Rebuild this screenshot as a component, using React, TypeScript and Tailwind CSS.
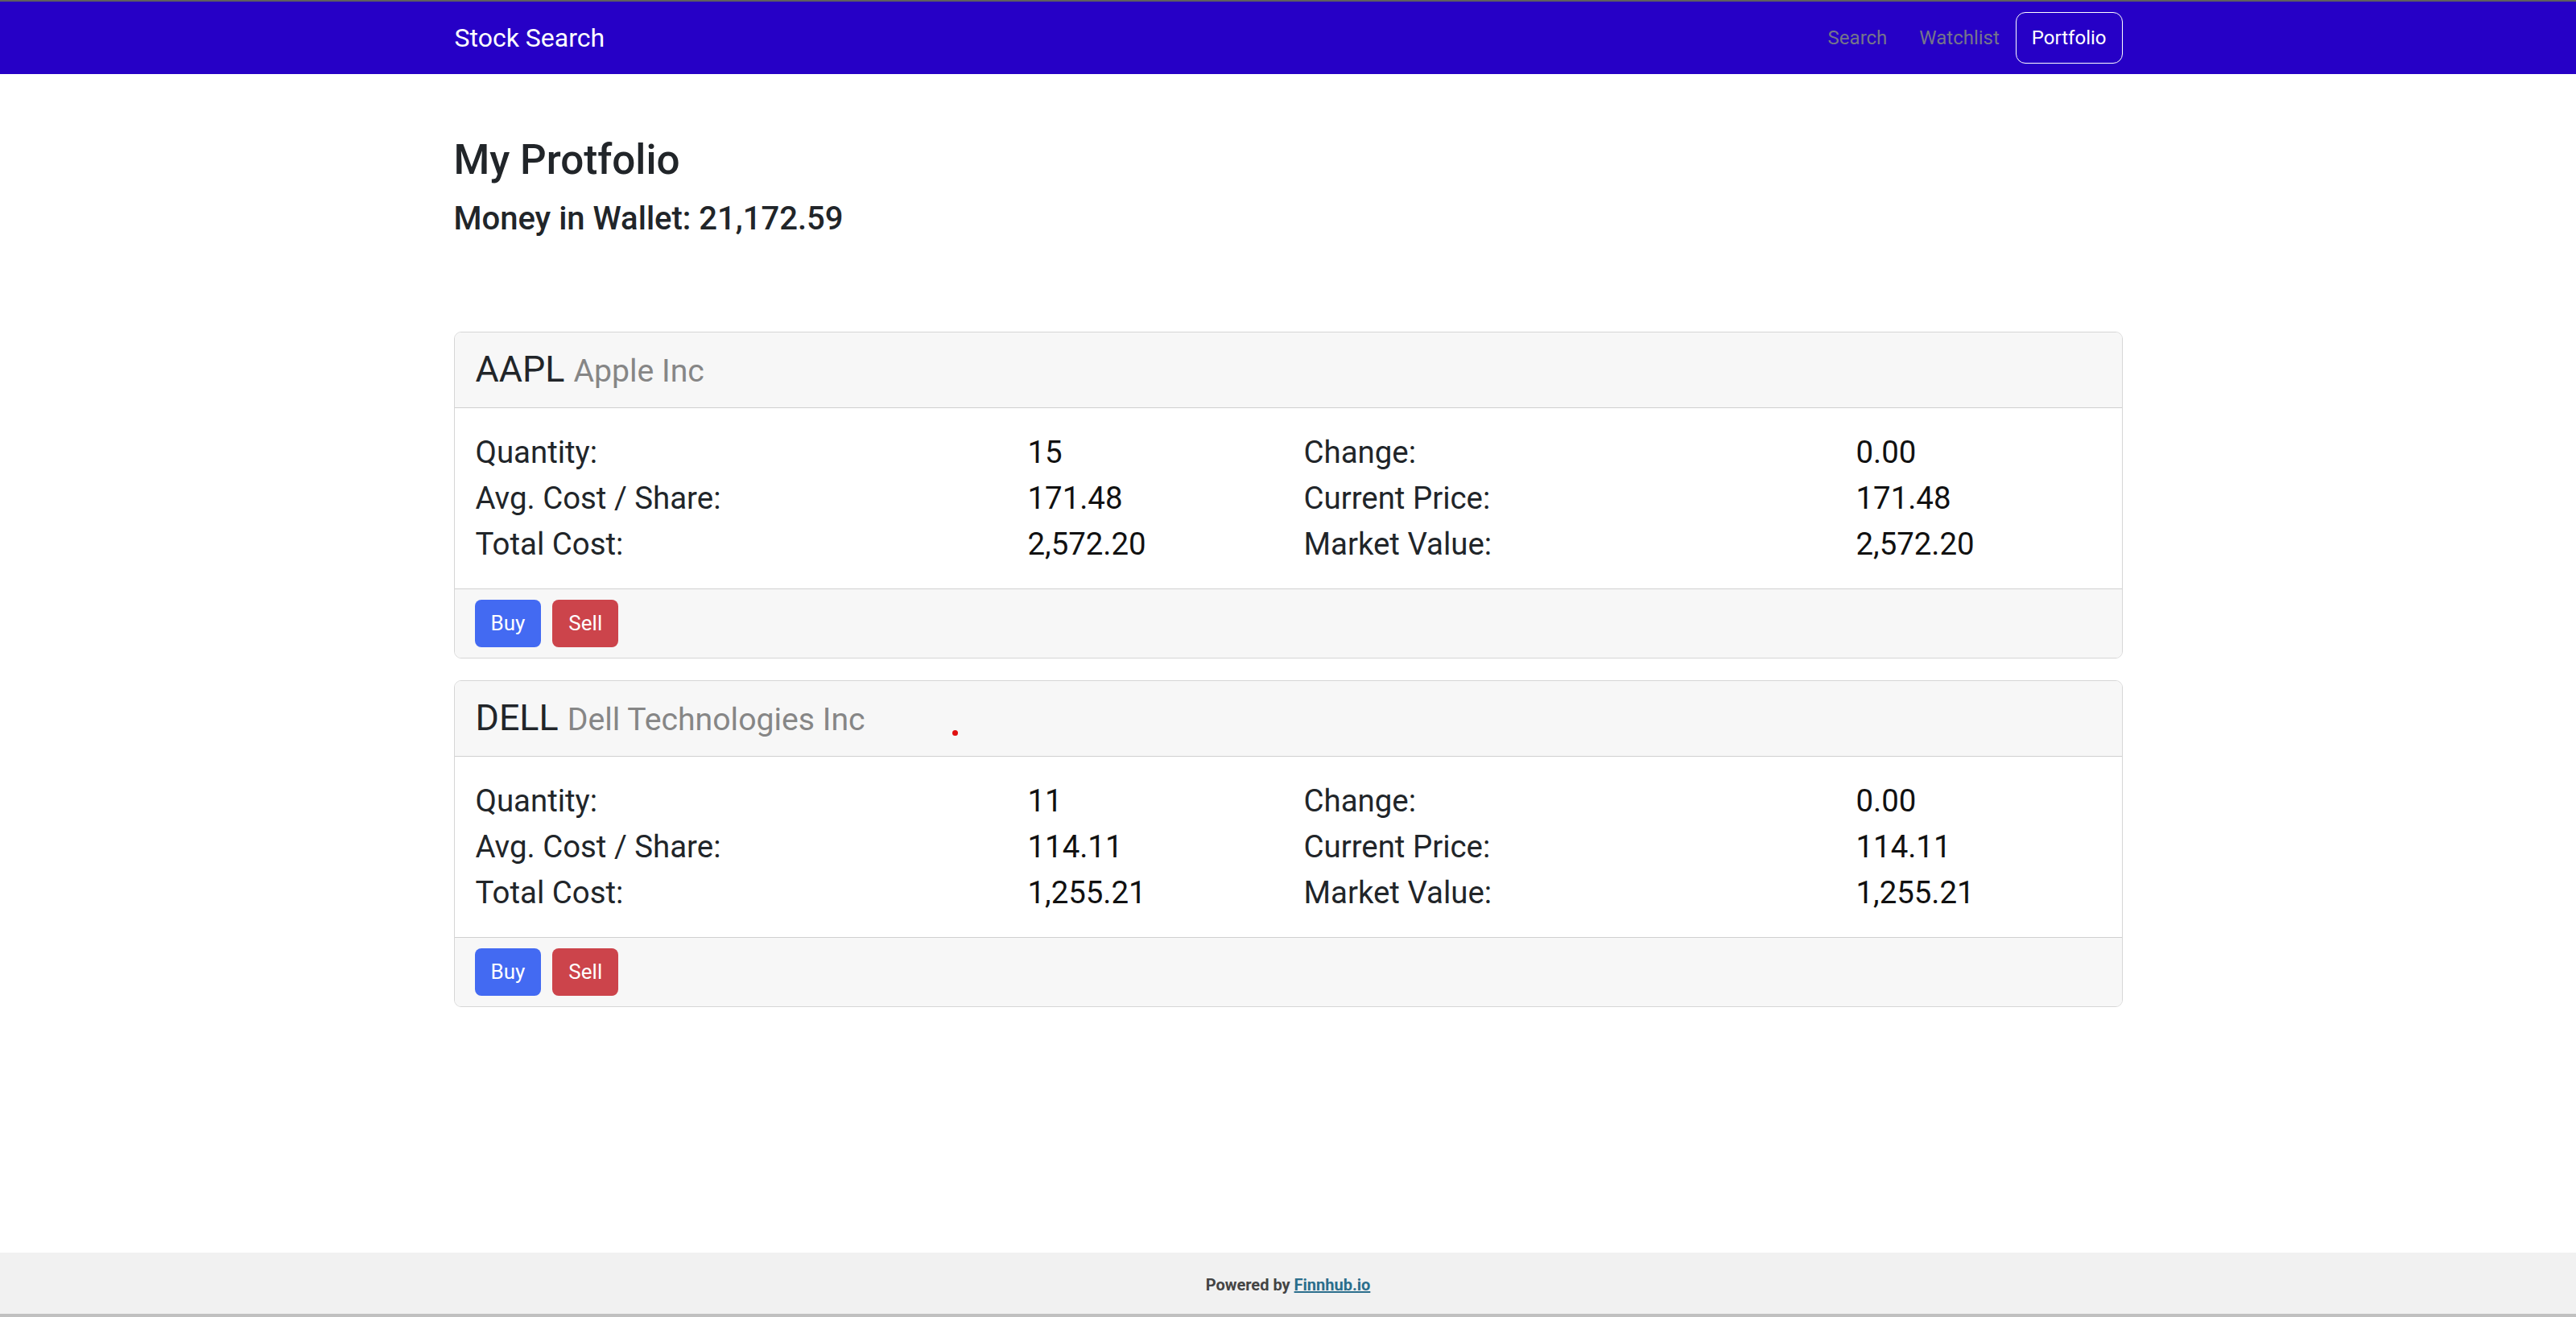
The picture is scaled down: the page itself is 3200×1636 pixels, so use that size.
type Holding = {
  symbol: string;
  name: string;
  quantity: string;
  avgCost: string;
  totalCost: string;
  change: string;
  price: string;
  marketValue: string;
};

const holdings: Holding[] = [
  {
    symbol: 'AAPL',
    name: 'Apple Inc',
    quantity: '15',
    avgCost: '171.48',
    totalCost: '2,572.20',
    change: '0.00',
    price: '171.48',
    marketValue: '2,572.20',
  },
  {
    symbol: 'DELL',
    name: 'Dell Technologies Inc',
    quantity: '11',
    avgCost: '114.11',
    totalCost: '1,255.21',
    change: '0.00',
    price: '114.11',
    marketValue: '1,255.21',
  },
];

function Navbar() {
  return (
    <nav className="border-t-2 border-[#5f5f5f] bg-[#2600c6] h-[92px]">
      <div className="w-[2073px] mx-auto h-full flex items-center justify-between">
        <a className="text-[32px] text-white leading-none pl-px">Stock Search</a>
        <div className="flex items-center text-[24px] leading-none">
          <a className="px-[20px] text-[#75758a]">Search</a>
          <a className="px-[20px] text-[#75758a]">Watchlist</a>
          <a className="h-[64px] px-[19px] flex items-center border-[1.5px] border-white rounded-[12px] text-white">
            Portfolio
          </a>
        </div>
      </div>
    </nav>
  );
}

function HoldingCard({ h }: { h: Holding }) {
  const rows: [string, string, string, string][] = [
    ['Quantity:', h.quantity, 'Change:', h.change],
    ['Avg. Cost / Share:', h.avgCost, 'Current Price:', h.price],
    ['Total Cost:', h.totalCost, 'Market Value:', h.marketValue],
  ];
  return (
    <div className="border border-[#d6d6d6] rounded-[9px] overflow-hidden">
      <div className="bg-[#f7f7f7] border-b border-[#d0d0d0] pl-[26px] pt-[19px] pb-[18px]">
        <h3 className="text-[44.8px] leading-[54px] text-[#212529]">
          {h.symbol} <small className="text-[39.2px] text-[#868686]">{h.name}</small>
        </h3>
      </div>
      <div className="pt-[26px] pb-[27px] pl-[26px] grid grid-cols-[686px_343px_686px_1fr] text-[38.4px] leading-[57px] text-[#212529]">
        {rows.map((r) => (
          <div key={r[0]} className="contents">
            <div>{r[0]}</div>
            <div className="text-[#111]">{r[1]}</div>
            <div>{r[2]}</div>
            <div className="text-[#111]">{r[3]}</div>
          </div>
        ))}
      </div>
      <div className="bg-[#f7f7f7] border-t border-[#d0d0d0] pl-[25px] pt-[13px] pb-[13px] flex gap-[14px]">
        <button className="h-[59px] px-[20px] rounded-[8px] bg-[#436af2] text-white text-[26px]">Buy</button>
        <button className="h-[59px] px-[20px] rounded-[8px] bg-[#cc444b] text-white text-[26px]">Sell</button>
      </div>
    </div>
  );
}

export default function App() {
  return (
    <div className="relative min-h-screen flex flex-col bg-white font-['Roboto',sans-serif]">
      <Navbar />

      <main className="w-[2073px] mx-auto pt-[76px]">
        <h2 className="text-[51.2px] leading-[61px] font-medium text-[#212529]">My Protfolio</h2>
        <h4 className="mt-[20px] text-[40px] leading-[46px] font-medium text-[#212529]">
          Money in Wallet: 21,172.59
        </h4>

        <div className="mt-[117px] flex flex-col gap-[27px]">
          {holdings.map((h) => (
            <HoldingCard key={h.symbol} h={h} />
          ))}
        </div>
      </main>

      <footer className="mt-auto h-[80px] bg-[#f1f1f1] border-b-4 border-[#c0c0c0] flex items-center justify-center pt-[4px]">
        <p className="text-[20px] font-bold text-[#444]">
          Powered by{' '}
          <a className="text-[#2b6e8c] underline">Finnhub.io</a>
        </p>
      </footer>

      {/* cursor dot in the capture */}
      <span className="absolute left-[1183px] top-[907px] w-[7px] h-[7px] rounded-full bg-[#e01010]" />
    </div>
  );
}
